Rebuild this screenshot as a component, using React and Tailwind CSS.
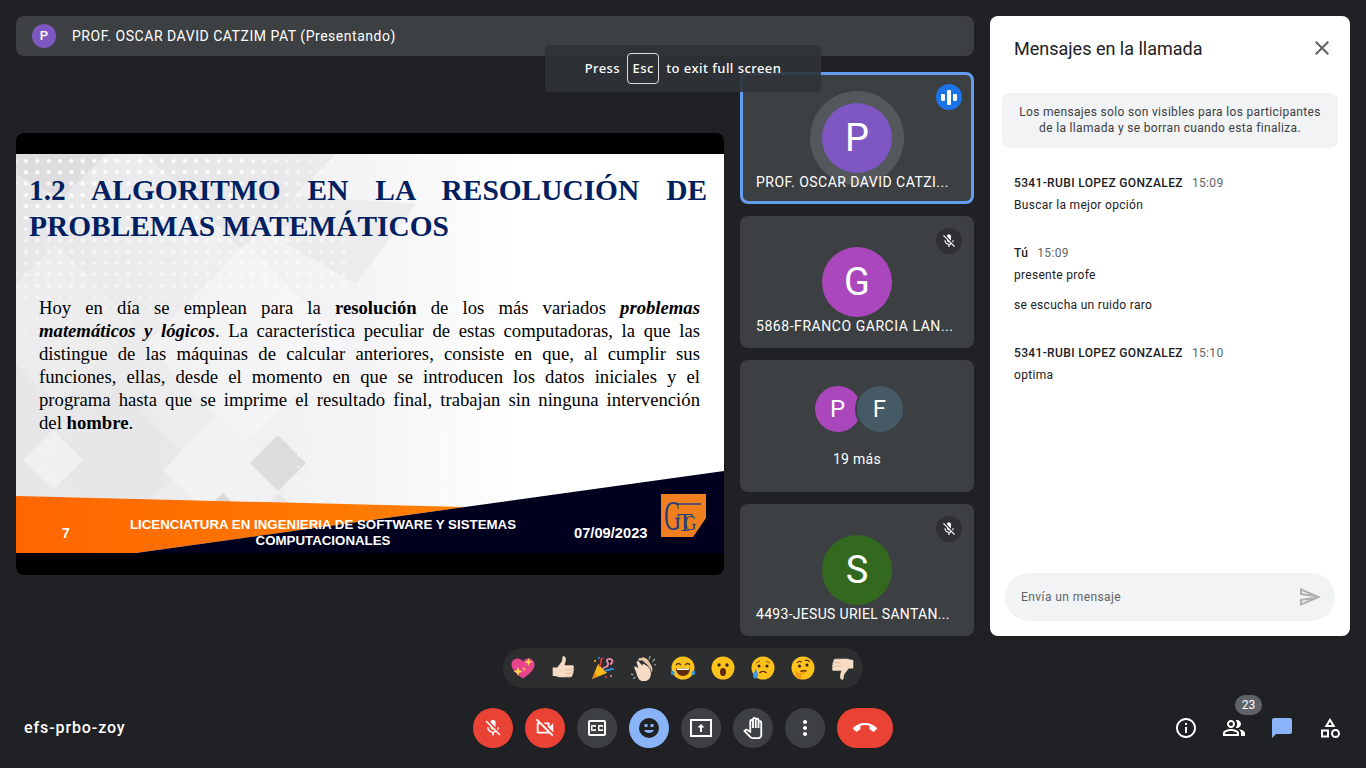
import React from "react";
import {
  MdCallEnd,
  MdChatBubble,
  MdClose,
  MdInfoOutline,
  MdMicOff,
  MdMoreVert,
  MdOutlineCategory,
  MdOutlineClosedCaption,
  MdOutlinePanTool,
  MdOutlinePeopleAlt,
  MdOutlineSend,
  MdOutlineVideocamOff,
} from "react-icons/md";

const SlideBackground = () => (
  <svg className="absolute inset-0" width="708" height="399" viewBox="0 0 708 399">
    <defs>
      <linearGradient id="paper" x1="0" y1="0" x2="1" y2="0">
        <stop offset="0" stopColor="#e6e6e8" />
        <stop offset="0.5" stopColor="#f5f5f7" />
        <stop offset="0.72" stopColor="#ffffff" />
      </linearGradient>
      <linearGradient id="naranja" x1="0" y1="0" x2="1" y2="0">
        <stop offset="0" stopColor="#ff6600" />
        <stop offset="1" stopColor="#ff8000" />
      </linearGradient>
      <pattern id="dots" x="5" y="2" width="11.35" height="11.35" patternUnits="userSpaceOnUse">
        <circle cx="5" cy="5" r="2.1" fill="#ffffff" />
      </pattern>
      <pattern id="dotsSmall" x="5" y="2" width="11.35" height="11.35" patternUnits="userSpaceOnUse">
        <circle cx="5" cy="5" r="1.1" fill="#ffffff" />
      </pattern>
      <linearGradient id="fadeTop" x1="0" y1="0" x2="1" y2="0">
        <stop offset="0" stopColor="#fff" stopOpacity="0.9" />
        <stop offset="0.65" stopColor="#fff" stopOpacity="0.9" />
        <stop offset="1" stopColor="#fff" stopOpacity="0.1" />
      </linearGradient>
      <mask id="maskTop">
        <rect x="0" y="0" width="350" height="65" fill="url(#fadeTop)" />
      </mask>
    </defs>
    <rect width="708" height="399" fill="url(#paper)" />
    <polygon points="0,0 90,0 45,45 0,20" fill="#d8d8da" opacity="0.7" />
    <polygon points="130,0 320,0 225,95" fill="#dcdcde" opacity="0.4" />
    <polygon points="260,40 400,50 340,130 270,90" fill="#e6e6e8" opacity="0.6" />
    <polygon points="40,90 120,170 40,250 -40,170" fill="#eeeeef" opacity="0.8" />
    <polygon points="230,90 330,190 230,290 130,190" fill="#ffffff" opacity="0.3" />
    <polygon points="100,231 175,306 100,381 25,306" fill="#e6e6e8" opacity="0.8" />
    <polygon points="37,276 67,306 37,336 7,306" fill="#f3f3f4" opacity="0.8" />
    <polygon points="207,256 267,316 207,376 147,316" fill="#f2f2f4" opacity="0.8" />
    <polygon points="262,281 290,309 262,337 234,309" fill="#dcdcde" />
    <polygon points="207,339 224,356 207,373 190,356" fill="#d8d8da" />
    <polygon points="263,339 280,356 263,373 246,356" fill="#e6e6e8" />
    <rect width="350" height="65" fill="url(#dots)" mask="url(#maskTop)" />
    <rect y="65" width="330" height="70" fill="url(#dots)" opacity="0.55" />
    <rect y="135" width="300" height="50" fill="url(#dotsSmall)" opacity="0.7" />
    <rect x="280" y="270" width="170" height="80" fill="url(#dotsSmall)" opacity="0.8" />
    <polygon points="0,342 449,353 120,399 0,399" fill="url(#naranja)" />
    <polygon points="708,317 449,353 120,399 708,399" fill="#00001e" />
    {/* logo */}
    <polygon points="645,340 690,340 690,364 677,383 645,383" fill="#f0801f" />
    <g fontFamily="Liberation Serif" fill="#2a3f7d">
      <text transform="translate(648 376) scale(0.65 1.15)" fontSize="36">G</text>
      <text transform="translate(661 377)" fontSize="26">T</text>
      <text transform="translate(668 376) scale(0.85 1)" fontSize="20">G</text>
    </g>
    <line x1="662" y1="350" x2="685" y2="350" stroke="#2a3f7d" strokeWidth="1.5" />
  </svg>
);

/* emojis de la barra de reacciones */
const Heart = () => (
  <svg width="24" height="24" viewBox="0 0 24 24">
    <path d="M12 22.500C5 17.500 0.500 13.500 0.500 8.500 0.500 5 3.300 2.500 6.500 2.500c2.300 0 4.200 1.200 5.500 3 1.300-1.800 3.200-3 5.500-3 3.200 0 6 2.500 6 6 0 5-4.500 9-11.500 14z" fill="#e9458c" />
    <path d="M17.500 2l1 3 3 1-3 1-1 3-1-3-3-1 3-1zM7 11l1.200 3.300L11.500 15.500 8.200 16.700 7 20l-1.200-3.300L2.500 15.500l3.300-1.200z" fill="#fde047" />
    <path d="M13 11l.6 1.400L15 13l-1.400.6L13 15l-.6-1.400L11 13l1.400-.6z" fill="#fde047" />
  </svg>
);

const Thumb = ({ down }) => (
  <svg width="24" height="24" viewBox="2 1 20 21" className={down ? "rotate-180" : ""}>
    <path d="M3 11h4l3.500-4.500c.8-1.300 1-3 1-4.500 0-1 2.800-1.200 3 1.500.1 2-.5 4-1.200 5.500H20c1.700 0 2 2 1 2.800.8.800.8 2-.1 2.700.5.900.3 2-.6 2.500.3 1.300-.5 2.500-2 2.500H9c-2 0-2.500-1-6-1z" fill="#f6dcc4" />
    <path d="M14 13h6.500M14 16h6M14 19h4.500" stroke="#dcb999" strokeWidth="0.8" fill="none" />
  </svg>
);

const Party = () => (
  <svg width="24" height="24" viewBox="0 0 24 24">
    <polygon points="1,23 7,8 16,17" fill="#f9b916" />
    <polygon points="3.500,17 6,19.500 1,23" fill="#ee7d1a" />
    <path d="M9 11c-1-3 2-3 1-6-.4-1.200.6-3 2-2" stroke="#e33e3e" strokeWidth="1.700" fill="none" />
    <path d="M12 13c1-3 4-1 5-4s-2-3-1-5 4-1 5 0 0 4-2 4" stroke="#ec8fb0" strokeWidth="1.800" fill="none" />
    <path d="M14 15c2-2 4 0 6-2 1-1 2 0 2 1" stroke="#2a8fd8" strokeWidth="1.800" fill="none" />
    <circle cx="4" cy="5" r="1.100" fill="#f9b916" />
    <circle cx="8" cy="2" r="1" fill="#2a8fd8" />
    <circle cx="20" cy="20" r="1.100" fill="#ec8fb0" />
    <circle cx="15" cy="21" r="1" fill="#e33e3e" />
  </svg>
);

const Clap = () => (
  <svg width="25" height="25" viewBox="1 1 22 22">
    <path d="M5 14c-1-2-1.500-3.500-.5-4l3 1.500L6 7c-.3-1.500 1.200-2 2-1l3 3.500.5-2 4 2.500c3 2.500 4 7 2 10.500-2 3-6.500 3.500-9 1.500-1.500-1.500-2.500-5-3.500-8z" fill="#f6dcc4" />
    <path d="M7 5l1.500-2.500 1.500.5 1-1 2 .5 1.500 1 1.500 1 3 5c1 2 1 4.500.5 6-1-3.500-3.500-6.500-5.500-8L11 5z" fill="#e9c6a6" />
    <path d="M17 4l.8-3M20 6l2-2.500M21.500 9l2-.5M1 17l2 .5M3 21l2-1.500" stroke="#9aa0a6" strokeWidth="1.200" />
  </svg>
);

const Face = ({ children }) => (
  <svg width="24" height="24" viewBox="0 0 24 24">
    <circle cx="12" cy="12" r="11.500" fill="#fcc21b" />
    {children}
  </svg>
);

const Joy = () => (
  <Face>
    <path d="M5 9c1.500-2 3-2 5 0M14 9c2-2 3.500-2 5 0" stroke="#5d3a1a" strokeWidth="1.500" fill="none" />
    <path d="M5 12.500h14c0 4-3 7.500-7 7.500s-7-3.500-7-7.500z" fill="#5d2a0e" />
    <path d="M6 12.500h12v1.500H6z" fill="#fff" />
    <path d="M1 14c-1 2-2 3-.5 4.500S4 18 3.500 16zM23 14c1 2 2 3 .5 4.500S20 18 20.500 16z" fill="#3d97e3" />
  </Face>
);

const Wow = () => (
  <Face>
    <circle cx="8" cy="9" r="1.700" fill="#33261a" />
    <circle cx="16" cy="9" r="1.700" fill="#33261a" />
    <ellipse cx="12" cy="16" rx="3" ry="4" fill="#5d2a0e" />
  </Face>
);

const Cry = () => (
  <Face>
    <circle cx="8" cy="10" r="1.500" fill="#33261a" />
    <circle cx="16" cy="10" r="1.500" fill="#33261a" />
    <path d="M8.500 17c2-2 5-2 7 0" stroke="#5d2a0e" strokeWidth="1.600" fill="none" />
    <path d="M5 13c-1.500 3-3 4.500-3 6.500C2 22 4 23 5.500 22s2-2 1.500-3.500z" fill="#3d97e3" />
    <path d="M5 7l4-2M15 5l4 2" stroke="#8a5a20" strokeWidth="1" />
  </Face>
);

const Thinking = () => (
  <Face>
    <path d="M6 7c1-1.500 3-2 4.500-1M14 4.500c1.500-.5 3.500 0 4.500 1.500" stroke="#5d3a1a" strokeWidth="1.300" fill="none" />
    <circle cx="8.500" cy="10" r="1.500" fill="#33261a" />
    <circle cx="16" cy="9" r="1.500" fill="#33261a" />
    <path d="M9.500 15.500c2-1 4-1 6-.5" stroke="#5d2a0e" strokeWidth="1.400" fill="none" />
    <path d="M4 16l1.500-1 2 2 6-1 1 1.500-4.500 1.500 1 3.500c-2 1.500-5 .5-6-1.500z" fill="#f59e0b" />
  </Face>
);

const emojis = [
  <Heart />,
  <Thumb />,
  <Party />,
  <Clap />,
  <Joy />,
  <Wow />,
  <Cry />,
  <Thinking />,
  <Thumb down />,
];

const MuteBadge = () => (
  <div className="absolute top-3 right-3 w-[26px] h-[26px] rounded-full bg-[#2e3033] flex items-center justify-center text-white">
    <MdMicOff size={16} />
  </div>
);

const Tile = ({ letter, color, name, muted, active, nameClass = "tracking-[0.55px]" }) => (
  <div className={`relative h-[132px] rounded-lg bg-[#3c4043] flex items-center justify-center ${active ? "border-[3px] border-[#639cf0]" : ""}`}>
    {active && (
      <div className="absolute top-[9px] right-[9px] w-[26px] h-[26px] rounded-full bg-[#1a73e8] flex items-center justify-center gap-[2px]">
        <span className="w-[4px] h-[7px] bg-white rounded-[1px]"></span>
        <span className="w-[4px] h-[15px] bg-white rounded-[1px]"></span>
        <span className="w-[4px] h-[7px] bg-white rounded-[1px]"></span>
      </div>
    )}
    {muted && <MuteBadge />}
    <div className="relative">
      {active && <div className="absolute -inset-3 rounded-full bg-[#54585c]"></div>}
      <div className="relative w-[70px] h-[70px] rounded-full flex items-center justify-center text-white text-[38px] font-['Roboto',sans-serif]" style={{ background: color }}>
        {letter}
      </div>
    </div>
    <div className={`absolute whitespace-nowrap text-white text-[14px] leading-5 font-['Roboto',sans-serif] ${nameClass} ${active ? "left-[13px] bottom-[9px]" : "left-4 bottom-3"}`}>
      {name}
    </div>
  </div>
);

const RoundBtn = ({ children, className }) => (
  <button className={`w-10 h-10 rounded-full flex items-center justify-center text-white ${className}`}>
    {children}
  </button>
);

const ChatMessage = ({ name, time, lines }) => (
  <div className="mb-[28px]">
    <div className="h-5 flex items-center gap-[9px] text-[12px] tracking-[0.35px]">
      <span className="font-medium text-[#202124]">{name}</span>
      <span className="text-[#5f6368]">{time}</span>
    </div>
    {lines.map((line, i) => (
      <div key={i} className={`h-5 leading-5 text-[12px] tracking-[0.3px] text-[#202124] ${i === 0 ? "mt-[2px]" : "mt-[10px]"}`}>{line}</div>
    ))}
  </div>
);

const bodyLines = [
  <>Hoy en día se emplean para la <b>resolución</b> de los más variados <b><i>problemas</i></b></>,
  <><b><i>matemáticos y lógicos</i></b>. La característica peculiar de estas computadoras, la que las</>,
  <>distingue de las máquinas de calcular anteriores, consiste en que, al cumplir sus</>,
  <>funciones, ellas, desde el momento en que se introducen los datos iniciales y el</>,
  <>programa hasta que se imprime el resultado final, trabajan sin ninguna intervención</>,
];

export default function App() {
  return (
    <div className="relative w-[1366px] h-[768px] overflow-hidden bg-[#202124] font-['Roboto',sans-serif]">
      {/* aviso de pantalla completa */}
      <div className="absolute left-[545px] top-[45px] z-10 w-[276px] h-[47px] rounded bg-[#2f3337]/90 flex items-center justify-center gap-[7px] text-white text-[13px] font-medium tracking-[0.45px] font-['Noto_Sans',sans-serif]">
        <span>Press</span>
        <span className="w-8 h-[31px] border border-[#dadce0] rounded-[4px] flex items-center justify-center">Esc</span>
        <span>to exit full screen</span>
      </div>

      <div className="flex gap-4 px-4 pt-4">
        <div className="w-[958px] h-[620px] flex flex-col gap-4">
          <div className="h-10 shrink-0 rounded-lg bg-[#3c4043] flex items-center pl-4 gap-4">
            <div className="w-6 h-6 rounded-full bg-[#7e57c2] text-white text-[13px] font-medium flex items-center justify-center">P</div>
            <span className="text-white text-[14px] tracking-[0.53px]">PROF. OSCAR DAVID CATZIM PAT (Presentando)</span>
          </div>
          <div className="flex-1 flex items-center gap-4">
            {/* diapositiva */}
            <div className="w-[708px] h-[442px] rounded-lg bg-black overflow-hidden py-[21px] flex">
              <div className="relative w-[708px] h-[399px] flex flex-col font-['Liberation_Serif',serif]">
                <SlideBackground />
                <div className="relative pl-[13px] pr-[17px] pt-[18px] text-[#002060] font-bold text-[29.4px] leading-[36px]">
                  <div className="[text-align-last:justify]">1.2 ALGORITMO EN LA RESOLUCIÓN DE</div>
                  <div>PROBLEMAS MATEMÁTICOS</div>
                </div>
                <div className="relative mt-[52px] pl-[23px] pr-[24px] text-black text-[18.7px] leading-[23px]">
                  {bodyLines.map((line, i) => (
                    <div key={i} className="[text-align-last:justify]">{line}</div>
                  ))}
                  <div>del <b>hombre</b>.</div>
                </div>
                <div className="relative mt-auto pb-1 flex items-center text-white font-bold text-[14px] leading-4 font-['Liberation_Sans',sans-serif]">
                  <div className="w-[100px] text-center">7</div>
                  <div className="w-[414px] text-center text-[13.3px]">
                    <div>LICENCIATURA EN INGENIERIA DE SOFTWARE Y SISTEMAS</div>
                    <div>COMPUTACIONALES</div>
                  </div>
                  <div className="ml-[44px] text-[14.7px]">07/09/2023</div>
                </div>
              </div>
            </div>

            {/* mosaicos */}
            <div className="w-[234px] flex flex-col gap-3">
              <Tile active letter="P" color="#7e57c2" name="PROF. OSCAR DAVID CATZI..." nameClass="tracking-[0.47px]" />
              <Tile muted letter="G" color="#ab47bc" name="5868-FRANCO GARCIA LAN..." />
              <div className="h-[132px] rounded-lg bg-[#3c4043] flex flex-col items-center pt-[26px]">
                <div className="flex ml-[5px]">
                  <div className="w-[46px] h-[46px] rounded-full bg-[#ab47bc] text-white text-[24px] flex items-center justify-center">P</div>
                  <div className="-ml-[6px] w-[50px] h-[50px] -mt-[2px] rounded-full bg-[#455a64] border-2 border-[#3c4043] text-white text-[24px] flex items-center justify-center">F</div>
                </div>
                <div className="mt-[15px] text-white text-[14px] leading-5 tracking-[0.3px]">19 más</div>
              </div>
              <Tile muted letter="S" color="#33691e" name="4493-JESUS URIEL SANTAN..." nameClass="tracking-[0.3px]" />
            </div>
          </div>
        </div>

        {/* panel de mensajes */}
        <div className="w-[360px] h-[620px] rounded-lg bg-white flex flex-col">
          <div className="h-[64px] shrink-0 flex items-center justify-between pl-6 pr-[16px]">
            <span className="text-[18px] text-[#202124]">Mensajes en la llamada</span>
            <MdClose size={24} className="text-[#5f6368]" />
          </div>
          <div className="mx-3 mt-[13px] h-[55px] shrink-0 rounded-lg bg-[#f1f3f4] flex items-center justify-center text-center text-[12px] leading-4 tracking-[0.33px] text-[#3c4043] px-4 pb-[2px]">
            Los mensajes solo son visibles para los participantes de la llamada y se borran cuando esta finaliza.
          </div>
          <div className="px-6 pt-[25px]">
            <ChatMessage name="5341-RUBI LOPEZ GONZALEZ" time="15:09" lines={["Buscar la mejor opción"]} />
            <ChatMessage name="Tú" time="15:09" lines={["presente profe", "se escucha un ruido raro"]} />
            <ChatMessage name="5341-RUBI LOPEZ GONZALEZ" time="15:10" lines={["optima"]} />
          </div>
          <div className="mt-auto mx-[15px] mb-[15px] h-12 shrink-0 rounded-full bg-[#f1f3f4] flex items-center justify-between pl-4 pr-[13px]">
            <span className="text-[12px] tracking-[0.42px] text-[#5f6368]">Envía un mensaje</span>
            <MdOutlineSend size={24} className="text-[#aeb0b2]" />
          </div>
        </div>
      </div>

      {/* reacciones */}
      <div className="flex justify-center mt-3">
        <div className="w-[360px] h-10 rounded-full bg-[#2d2e30] flex">
          {emojis.map((e, i) => (
            <div key={i} className="w-10 h-10 flex items-center justify-center">{e}</div>
          ))}
        </div>
      </div>

      {/* barra inferior */}
      <div className="mt-5 h-10 grid grid-cols-[1fr_auto_1fr] items-center">
        <div className="pl-6 text-white text-[16px] font-medium tracking-[0.9px]">efs-prbo-zoy</div>
        <div className="flex gap-3">
          <RoundBtn className="bg-[#ea4335]"><MdMicOff size={20} /></RoundBtn>
          <RoundBtn className="bg-[#ea4335]"><MdOutlineVideocamOff size={22} /></RoundBtn>
          <RoundBtn className="bg-[#3c4043]"><MdOutlineClosedCaption size={24} /></RoundBtn>
          <RoundBtn className="bg-[#8ab4f8]">
            <svg width="20" height="20" viewBox="0 0 20 20">
              <circle cx="10" cy="10" r="10" fill="#202124" />
              <rect x="5.500" y="6" width="3" height="3" fill="#8ab4f8" />
              <rect x="11.500" y="6" width="3" height="3" fill="#8ab4f8" />
              <path d="M5 12h10c-.8 2-2.800 3-5 3s-4.200-1-5-3z" fill="#8ab4f8" />
            </svg>
          </RoundBtn>
          <RoundBtn className="bg-[#3c4043]">
            <svg width="24" height="24" viewBox="0 0 24 24" fill="none">
              <rect x="2" y="4" width="20" height="16" stroke="white" strokeWidth="2" />
              <path d="M12 8l-3.500 3.500H11V16h2v-4.500h2.500z" fill="white" />
            </svg>
          </RoundBtn>
          <RoundBtn className="bg-[#3c4043]"><MdOutlinePanTool size={22} /></RoundBtn>
          <RoundBtn className="bg-[#3c4043]"><MdMoreVert size={24} /></RoundBtn>
          <button className="w-14 h-10 rounded-full bg-[#ea4335] flex items-center justify-center text-white">
            <MdCallEnd size={24} />
          </button>
        </div>
        <div className="flex justify-end pr-3 text-white">
          <div className="w-12 h-10 flex items-center justify-center"><MdInfoOutline size={24} /></div>
          <div className="relative w-12 h-10 flex items-center justify-center">
            <MdOutlinePeopleAlt size={24} />
            <span className="absolute -top-[13px] left-[25px] w-[27px] h-5 rounded-full bg-[#5f6368] text-[12px] flex items-center justify-center">23</span>
          </div>
          <div className="w-12 h-10 flex items-center justify-center"><MdChatBubble size={24} className="text-[#8ab4f8]" /></div>
          <div className="w-12 h-10 flex items-center justify-center"><MdOutlineCategory size={24} /></div>
        </div>
      </div>
    </div>
  );
}
